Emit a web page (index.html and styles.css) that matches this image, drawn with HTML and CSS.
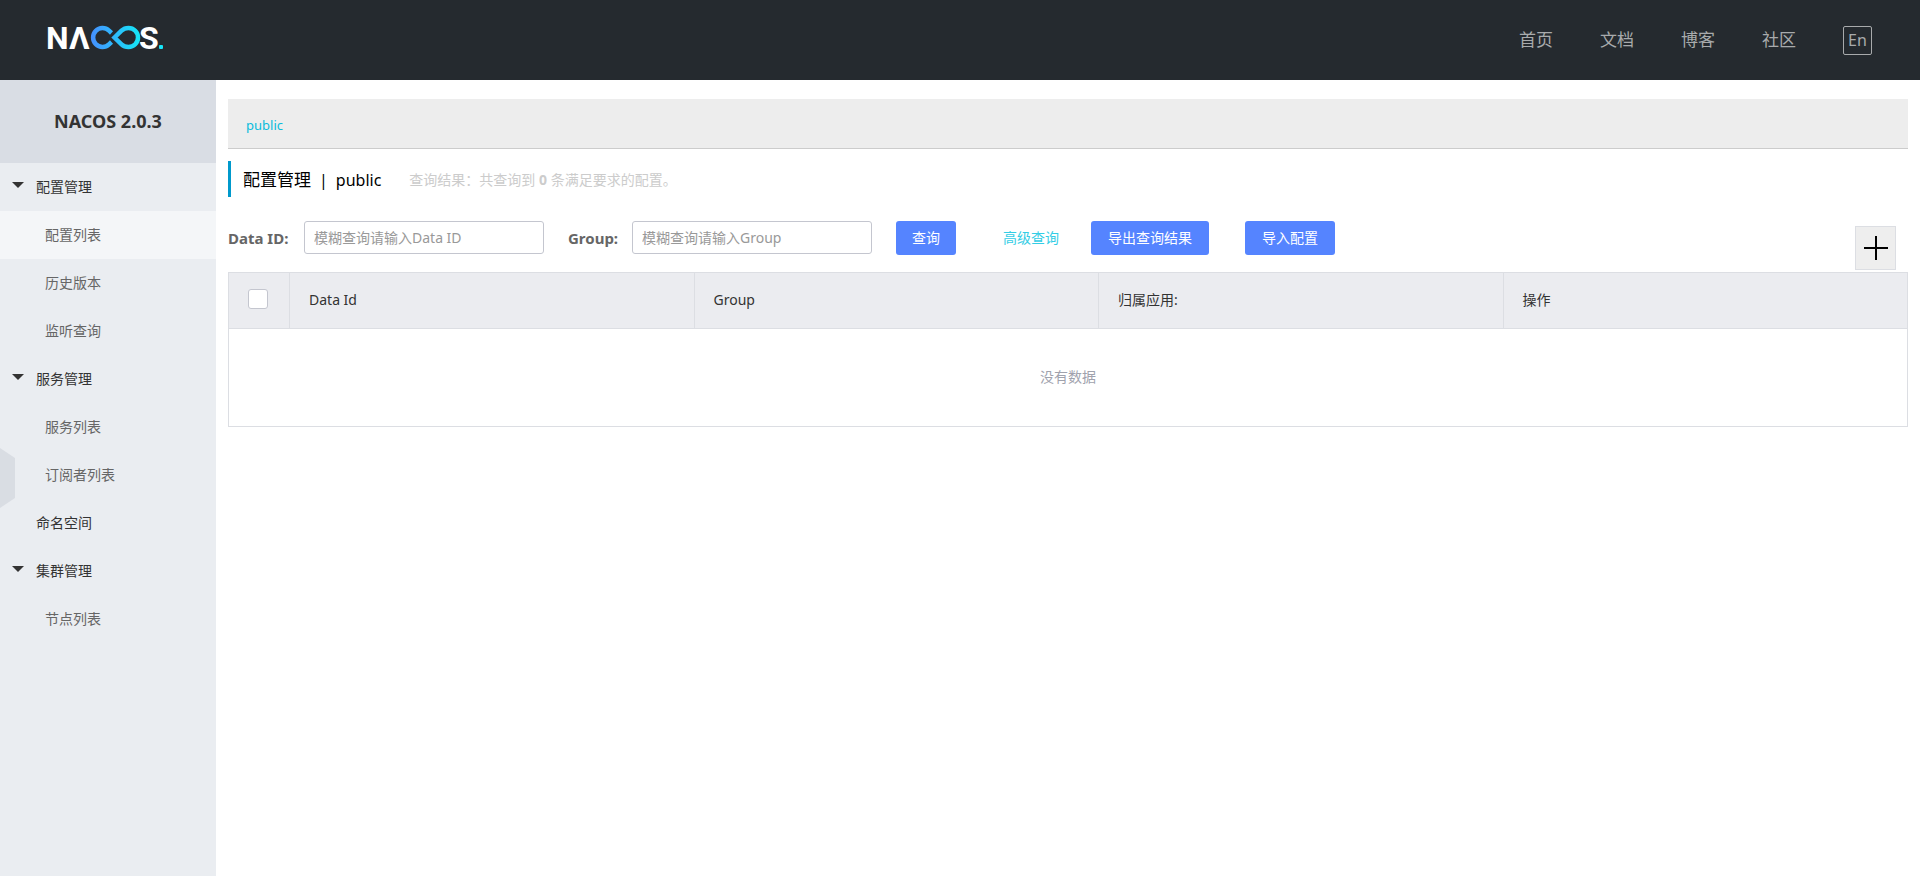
FILE: index.html
```html
<!DOCTYPE html>
<html lang="zh-CN">
<head>
<meta charset="utf-8">
<title>Nacos</title>
<link rel="stylesheet" href="styles.css">
</head>
<body>
<header class="header">
  <a class="logo" href="#" aria-label="Nacos">
    <svg width="120" height="44" viewBox="0 0 120 44">
      <defs>
        <linearGradient id="loop" gradientUnits="userSpaceOnUse" x1="45" y1="0" x2="92" y2="0">
          <stop offset="0" stop-color="#4590ff"/>
          <stop offset="1" stop-color="#16e4f7"/>
        </linearGradient>
      </defs>
      <g class="logo-text">
        <text x="0" y="31">N</text>
        <text x="23" y="31">Λ</text>
        <text x="93" y="31">S</text>
      </g>
      <g fill="none" stroke="url(#loop)" stroke-width="4.500" transform="translate(0 4)">
        <path d="M65.500 11 L63 8.700 A9.400 9.400 0 1 0 63 22.300 L65.500 20"/>
        <path d="M68.500 15.500 L75.500 8.700 C78 6.300 81 6 82.500 6 A9.500 9.500 0 0 1 82.500 25 C81 25 78 24.700 75.500 22.300 Z"/>
      </g>
      <rect x="113" y="27" width="4" height="4" rx="1" fill="#16e4f7"/>
    </svg>
  </a>
  <nav class="nav">
    <a href="#">首页</a>
    <a href="#">文档</a>
    <a href="#">博客</a>
    <a href="#">社区</a>
    <button class="lang" type="button">En</button>
  </nav>
</header>
<div class="body">
  <aside class="sidebar">
    <h1 class="product">NACOS 2.0.3</h1>
    <nav class="menu">
      <a class="group open" href="#">配置管理</a>
      <a class="item active" href="#">配置列表</a>
      <a class="item" href="#">历史版本</a>
      <a class="item" href="#">监听查询</a>
      <a class="group open" href="#">服务管理</a>
      <a class="item" href="#">服务列表</a>
      <a class="item" href="#">订阅者列表</a>
      <a class="group" href="#">命名空间</a>
      <a class="group open" href="#">集群管理</a>
      <a class="item" href="#">节点列表</a>
    </nav>
    <button class="collapse" type="button" aria-label="收起菜单"></button>
  </aside>
  <main class="main">
    <div class="namespaces"><a href="#">public</a></div>
    <div class="heading">
      <h2 class="title"><span>配置管理</span><span class="latin">|</span><span class="latin">public</span></h2>
      <p class="result">查询结果：共查询到 <strong>0</strong> 条满足要求的配置。</p>
    </div>
    <form class="search">
      <label class="label" for="dataid">Data ID:</label>
      <input class="field first" id="dataid" type="text" placeholder="模糊查询请输入Data ID">
      <label class="label" for="group">Group:</label>
      <input class="field" id="group" type="text" placeholder="模糊查询请输入Group">
      <button class="btn" type="button">查询</button>
      <a class="advanced" href="#">高级查询</a>
      <button class="btn wide" type="button">导出查询结果</button>
      <button class="btn wide import" type="button">导入配置</button>
      <button class="add" type="button" aria-label="新建配置">
        <svg width="24" height="24" viewBox="0 0 24 24"><path d="M12 0V24M0 12H24" stroke="#000" stroke-width="2"/></svg>
      </button>
    </form>
    <table class="table">
      <thead>
        <tr>
          <th class="check"><input type="checkbox" aria-label="全选"></th>
          <th>Data Id</th>
          <th>Group</th>
          <th>归属应用:</th>
          <th>操作</th>
        </tr>
      </thead>
      <tbody>
        <tr><td class="empty" colspan="5">没有数据</td></tr>
      </tbody>
    </table>
  </main>
</div>
</body>
</html>
```
FILE: styles.css
```css
* { box-sizing: border-box; }

body {
  margin: 0;
  min-height: 100vh;
  display: flex;
  flex-direction: column;
  background: #fff;
  color: #333;
  font: 14px/20px "Noto Sans", "Noto Sans CJK SC", sans-serif;
}

a { color: inherit; text-decoration: none; }
button, input { font: inherit; margin: 0; }
button { cursor: pointer; }
h1, h2, p { margin: 0; }

.header {
  height: 80px;
  padding: 0 48px 0 46px;
  display: flex;
  align-items: center;
  justify-content: space-between;
  background: #252a2f;
}
.logo { display: flex; }
.logo-text {
  fill: #fff;
  font: 700 32px Roboto, sans-serif;
}
.nav {
  display: flex;
  align-items: center;
  gap: 47px;
  color: #a8aaac;
  font-size: 17px;
}
.lang {
  width: 29px;
  height: 29px;
  padding: 0;
  border: 1px solid #a8aaac;
  border-radius: 2px;
  background: none;
  color: inherit;
  font-size: 16px;
  line-height: 26px;
}

.body { flex: 1; display: flex; }

.sidebar {
  position: relative;
  width: 216px;
  flex: none;
  background: #eaedf1;
}
.product {
  height: 83px;
  background: #d9dde4;
  color: #333;
  text-align: center;
  font-size: 18px;
  line-height: 83px;
}
.menu { display: flex; flex-direction: column; }
.group, .item { line-height: 48px; }
.group { display: flex; align-items: center; padding-left: 36px; }
.open { padding-left: 12px; }
.open::before {
  content: "";
  width: 12px;
  height: 6px;
  margin: 0 12px 4px 0;
  background: #333;
  clip-path: polygon(0 0, 100% 0, 50% 100%);
}
.item { padding-left: 45px; color: #666; }
.active { background: #f4f6f8; }
.collapse {
  position: absolute;
  left: 0;
  top: 368px;
  width: 15px;
  height: 60px;
  padding: 0;
  border: 0;
  background: #d9dde3;
  clip-path: polygon(0 0, 100% 10px, 100% 50px, 0 100%);
}

.main { flex: 1; min-width: 0; padding: 19px 12px; }
.namespaces {
  padding: 16px 18px 13px;
  border-bottom: 1px solid #ccc;
  background: #ededed;
  color: #0bbcdc;
  font-size: 13px;
}
.heading {
  height: 36px;
  margin: 12px 0 24px;
  padding: 2px 0 0 12px;
  display: flex;
  align-items: center;
  gap: 28px;
  border-left: 3px solid #09c;
}
.title {
  display: flex;
  align-items: center;
  gap: 8px;
  color: #000;
  font-size: 17px;
  font-weight: 400;
}
.latin { font-size: 16px; }
.result { color: #ccc; }

.search { display: flex; align-items: flex-start; height: 51px; }
.label {
  flex: none;
  width: 64px;
  color: #666;
  font-size: 15px;
  font-weight: 700;
  line-height: 34px;
}
.first { margin-left: 12px; }
.field {
  width: 240px;
  height: 33px;
  margin-right: 24px;
  padding: 0 9px;
  border: 1px solid #c4c6cf;
  border-radius: 3px;
  background: #fff;
  color: #333;
}
.field::placeholder { color: #999; opacity: 1; }
.btn {
  height: 34px;
  padding: 0 16px;
  border: 0;
  border-radius: 3px;
  background: #5584ff;
  color: #fff;
  white-space: nowrap;
}
.wide { padding: 0 17px; }
.advanced { margin: 0 32px 0 47px; color: #33cde5; line-height: 34px; }
.import { margin-left: 36px; }
.add {
  align-self: flex-end;
  width: 41px;
  height: 44px;
  margin: 0 12px 2px auto;
  padding: 0;
  display: flex;
  align-items: center;
  justify-content: center;
  border: 1px solid #dcdee3;
  background: #eee;
}

.table {
  width: 100%;
  table-layout: fixed;
  border-collapse: collapse;
  border: 1px solid #dcdee3;
}
.table th {
  height: 56px;
  padding: 0 19px 2px;
  border: 1px solid #dcdee3;
  background: #ebecf0;
  text-align: left;
  font-weight: 400;
}
.table .check { width: 61px; padding-bottom: 4px; }
.check input {
  appearance: none;
  display: block;
  width: 20px;
  height: 20px;
  border: 1px solid #c4c6cf;
  border-radius: 3px;
  background: #fff;
}
.table .empty {
  height: 98px;
  padding: 0 0 2px;
  color: #a0a2ad;
  text-align: center;
}
```
